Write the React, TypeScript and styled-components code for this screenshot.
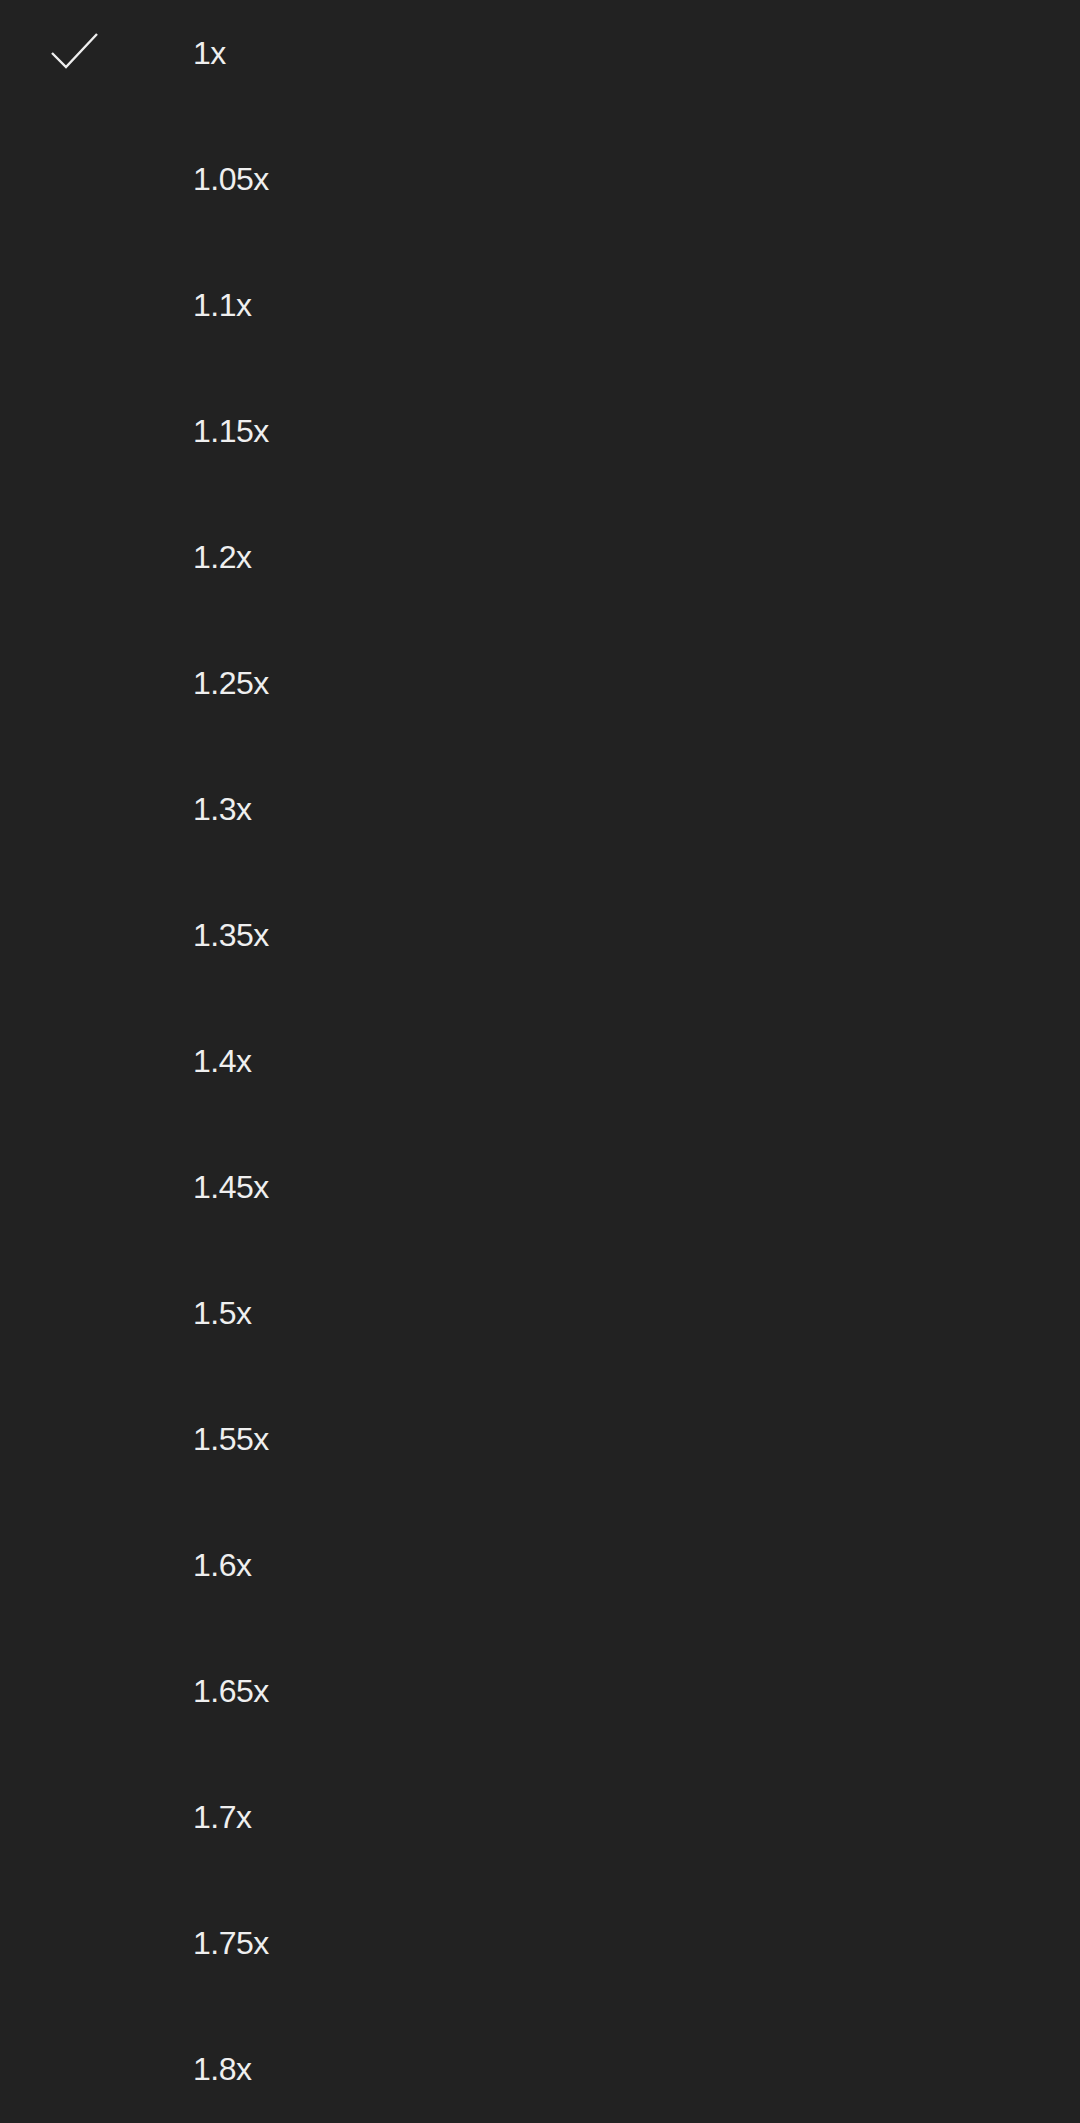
import React from "react";
import styled, { createGlobalStyle } from "styled-components";

const Global = createGlobalStyle`
  html, body { margin: 0; padding: 0; background: #222222; }
  body { font-family: "Liberation Sans", Arial, sans-serif; }
`;

const Page = styled.div`
  width: 1080px;
  height: 2123px;
  overflow: hidden;
  background: #222222;
`;

const List = styled.ul`
  list-style: none;
  margin: -11px 0 0 0;
  padding: 0;
`;

const Row = styled.li`
  height: 126px;
  display: flex;
  align-items: center;
`;

const CheckCell = styled.div`
  width: 193px;
  display: flex;
  align-items: center;
  padding-left: 50px;
  box-sizing: border-box;
  height: 100%;
`;

const Label = styled.span`
  font-size: 32px;
  color: #efefef;
  letter-spacing: -0.5px;
  line-height: 1;
  margin-top: 1px;
`;

const Check = () => (
  <svg width="50" height="40" viewBox="0 0 50 40" fill="none">
    <path d="M2 21 L16 35 L47 2" stroke="#eeeeee" strokeWidth="2.4" />
  </svg>
);

const speeds = ["1x", "1.05x", "1.1x", "1.15x", "1.2x", "1.25x", "1.3x", "1.35x", "1.4x", "1.45x", "1.5x", "1.55x", "1.6x", "1.65x", "1.7x", "1.75x", "1.8x"];

export default function App() {
  return (
    <Page>
      <Global />
      <List>
        {speeds.map((s, i) => (
          <Row key={s}>
            <CheckCell>{i === 0 && <Check />}</CheckCell>
            <Label>{s}</Label>
          </Row>
        ))}
      </List>
    </Page>
  );
}
